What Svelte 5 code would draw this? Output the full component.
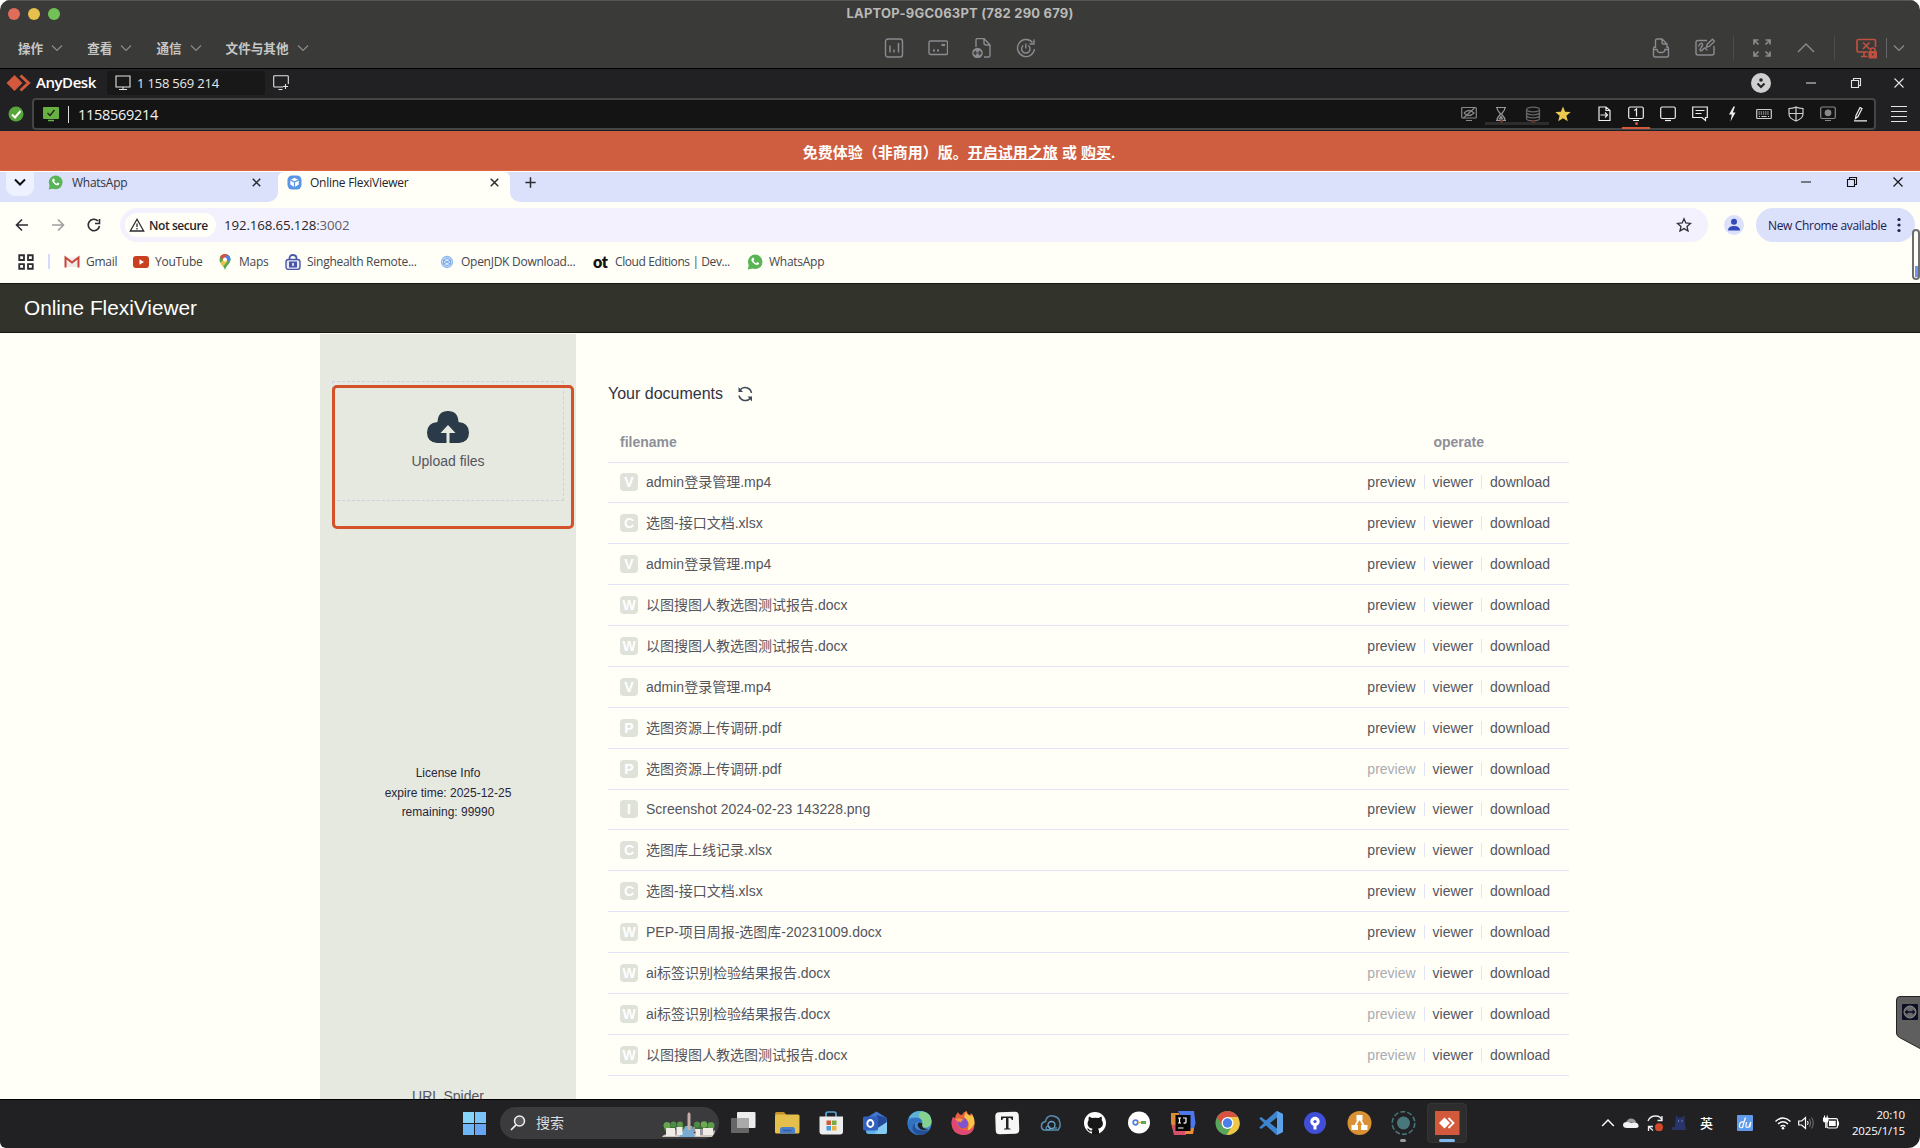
<script>
  // Inner markup of every icon, keyed by name.
  const icons = {
    chevron: '<path d="M1 3.5 6 8.5 11 3.5" fill="none" stroke="currentColor" stroke-width="1.2"/>',
    chart: '<rect x="1.5" y="1" width="17" height="18" rx="2.5"/><path d="M6 14.500V7.500M10 14.500V11.500M14.500 14.500V5" stroke-width="1.500"/>',
    card: '<rect x="1" y="3" width="18.500" height="13.500" rx="1.500"/><path d="M13.500 7h3.500" stroke-width="2.200"/><path d="M5 12.500h2M9 12.500h2" stroke-width="2"/>',
    fileSwap: '<path d="M4 9V2q0-1.500 1.500-1.500H12l6 6.500V17.500q0 1.500-1.500 1.500H12M12 .5V5q0 2 2 2h4"/><circle cx="5.500" cy="15" r="5.300" fill="currentColor" stroke="none"/><path d="M2 15h7M4 13 2 15l2 2M7 13l2 2-2 2" stroke="#3a3a38" stroke-width="1.200"/>',
    power: '<path d="M16.500 4.500A8.500 8.500 0 1 0 18.500 11M18 1.500v4.500h-4.500"/><path d="M7.300 7.500a4.200 4.200 0 1 0 5 0M9.800 5.500v5"/>',
    inbox: '<path d="M4.500 10V2.500Q4.500 1 6 1h5l5 5v4M11 1v3.500Q11 6 12.500 6H16"/><path d="M4.500 9H3.800Q2.500 9 2.500 10.500V17.500Q2.500 19 4 19H16q1.500 0 1.500-1.500V10.500Q17.500 9 16.200 9H16M2.500 11.500h3.500q.5 3 2.500 3h3q2 0 2.500-3h3.500"/>',
    sketch: '<path d="M12 2.500H3Q1 2.500 1 4.500v10.500q0 2 2 2H17q2 0 2-2V8"/><path d="M3.500 8.500c1-4 4.500-4 4-1.500S3.500 12 5.500 12.800s3-3.300 4.500-2.800.500 2 2.500 2"/><path d="m11.500 9 .8-2.800L17.500 1.200l2 2-5.200 5.200z"/>',
    fullscreen: '<path d="M2 6.500V2h4.500M2 2l4.500 4.500M13.500 2H18v4.500M18 2l-4.500 4.500M2 13.500V18h4.500M2 18l4.500-4.500M18 13.500V18h-4.500M18 18l-4.500-4.500" stroke-width="1.700"/>',
    up: '<path d="M2 14 10 6l8 8"/>',
    lockScreen: '<path d="M12 14H2.500Q1 14 1 12.500V3Q1 1.500 2.500 1.500h15.500q1.500 0 1.500 1.500v6M8 14v4.500M5 18.500h6.500M7 4.500l6.500 6.500M13.500 4.500 7 11" stroke-width="1.700"/><rect x="12.500" y="13" width="8.500" height="7.500" rx="1" fill="currentColor" stroke="none"/><path d="M14.500 13.500v-1.500q0-2 2.250-2T19 12v1.500" stroke-width="1.600"/><circle cx="16.750" cy="16.500" r="1" fill="#3a3a38" stroke="none"/>',
    monitor: '<path d="M1 1h14v11H1zM8 12v2.500M4 14.500h8"/>',
    monitorPlus: '<path d="M10 12H1.500Q.7 12 .7 11V1.500Q.7.700 1.500.700h13q.8 0 .8.800V9M5.500 14.500h4M12.500 9v5M10 11.500h5"/>',
    win_min: '<path d="M3 8h10"/>',
    win_restore: '<path d="M3.500 5.500h7v7h-7zM5.500 5.500v-2h7v7h-2"/>',
    win_close: '<path d="m3.500 3.500 9 9M12.500 3.500l-9 9"/>',
    eyeOff: '<rect x=".7" y="1.500" width="14.600" height="10.500" rx="1"/><path d="M5 14.500h6M3 7q5-5 10 0-5 5-10 0M2.500 12 13.500 2"/>',
    hourglass: '<path d="M3 1.500h10M3 14.500h10M4 1.500c0 4 3 5 3.500 6.500C7 9.500 4 10.500 4 14.500M12 1.500c0 4-3 5-3.500 6.500.500 1.500 3.500 2.500 3.500 6.500M6.500 13h3L8 10.500z"/>',
    db: '<ellipse cx="8" cy="3.500" rx="6.500" ry="2.300"/><path d="M1.500 3.500v9q0 2.300 6.500 2.300t6.500-2.300v-9M1.500 6.500Q2 8.800 8 8.800t6.500-2.300M1.500 9.500Q2 11.800 8 11.800t6.500-2.300"/>',
    star: '<path d="m8 .5 2.100 5.200 5.600.4-4.300 3.600 1.400 5.500L8 12.200l-4.800 3 1.400-5.500L.3 6.100l5.600-.4z" fill="#edc94f" stroke="none"/>',
    fileOut: '<path d="M3 1h7l4 3.500V14.500H3zM10 1v3.500h4M4.500 9h7M9 6.500 11.500 9 9 11.500"/>',
    mon1: '<rect x=".7" y="1" width="14.600" height="11.500" rx="1.500"/><path d="M5 14.500h6M6.300 4.500 8.500 3v7.500"/>',
    mon: '<rect x=".7" y="1" width="14.600" height="11.500" rx="1.500"/><path d="M5 14.500h6"/>',
    chat: '<path d="M.7 1h14.600v10.500H13.500v3l-3.500-3H.700zM3.500 4.500h9M3.500 7.500h6"/>',
    bolt: '<path d="M9.500.500 5 8.500h2.800L6.500 15.500 11.500 6.500H8.800L11 .500z" fill="currentColor" stroke="none"/>',
    keyboard: '<rect x=".7" y="3.500" width="14.600" height="9" rx=".8"/><path d="M2.500 6h11M2.500 8h11" stroke-dasharray="1.300 .9"/><path d="M3 10.500h1M5.500 10.500h5M12 10.500h1"/>',
    shield: '<path d="M1 2.500q4 0 7-1.500 3 1.500 7 1.500V8q0 4.500-7 7-7-2.500-7-7zM8 1v14M1 7.500h14"/>',
    record: '<rect x=".7" y="1" width="14.600" height="11.500" rx="1.500"/><path d="M5 14.500h6"/><circle cx="8" cy="6.800" r="2.800" fill="currentColor"/>',
    pen: '<path d="M3.500 12.500 4 9.500 8 1.500l2 1L6 10.500zM2 14.800h13"/>',
    burger: '<path d="M0 .5h16M0 5.500h16M0 10.500h16M0 15.500h16"/>',
    wa: '<circle cx="8.200" cy="7.800" r="7.300" fill="#58b455"/><path d="m.7 15.500 1.300-5 3.800 4z" fill="#58b455"/><path d="M5.200 4q1-.8 1.500 0l.7 1.600-.9 1.100q.9 1.800 2.700 2.500l1.100-1.100 1.700.8q.5.700-.6 1.700-1.400 1-4-.6Q4 7.500 4.400 5.200z" fill="#fff"/>',
    flexi: '<rect x=".5" y=".5" width="15" height="15" rx="5" fill="#5b95e6"/><path d="m8 3 4.500 2.200v5L8 13l-4.500-2.800v-5z" fill="#fff"/><path d="M3.500 5.200 8 7.500l4.500-2.300M8 7.500V13" fill="none" stroke="#5b95e6" stroke-width="1.200"/>',
    close: '<path d="m4 4 8 8M12 4l-8 8"/>',
    plus: '<path d="M8 2.500v11M2.500 8h11"/>',
    back: '<path d="M14 8H3M8 2.500 2.500 8 8 13.500"/>',
    fwd: '<path d="M2 8h11M8 2.500 13.500 8 8 13.500"/>',
    reload: '<path d="M13.500 9A5.700 5.700 0 1 1 12 4M13.500 2v4.500H9"/>',
    warn: '<path d="M8 2.200 14.700 14H1.300zM8 6.500v3.500M8 11v1.500"/>',
    starOutline: '<path d="m8 1.800 1.800 4.200 4.700.4-3.500 3.100 1 4.500-4-2.400-4 2.400 1-4.500-3.500-3.100 4.700-.4z"/>',
    user: '<circle cx="10" cy="10" r="10" fill="#dbe0fb"/><circle cx="10" cy="6.800" r="3" fill="#3548ba"/><path d="M4 15.500q0-4.500 6-4.500t6 4.500z" fill="#3548ba"/>',
    grid: '<path d="M2 2h4.200v4.200H2zM9.800 2H14v4.200H9.800zM2 9.800h4.200V14H2zM9.800 9.800H14V14H9.800z"/>',
    gmail: '<path d="M2 3.500h12V13H2z" fill="#eeeae6"/><path d="M1.500 13.500v-10L8 8.500l6.500-5v10" fill="none" stroke="#c9453a" stroke-width="2"/>',
    youtube: '<rect x="0" y="2" width="16" height="12" rx="3" fill="#c8401f"/><path d="M6.500 5.200 11 8l-4.500 2.800z" fill="#fff"/>',
    maps: '<path d="M8 0a5.500 5.500 0 0 1 5.500 5.500C13.500 9.500 9.500 11 8 16 6.500 11 2.500 9.500 2.500 5.500A5.500 5.500 0 0 1 8 0" fill="#54a853"/><path d="M8 0a5.500 5.500 0 0 0-5 3.300L6.500 6 10.500.600Q9.500 0 8 0" fill="#d95040"/><path d="M10.500.6 8 4l4 3.500Q13.500 6 13.500 5 13.200 2 10.500.600" fill="#4a80e8"/><path d="m3.500 9 4-4.500 3 3-4.500 5z" fill="#f0c244"/><circle cx="8" cy="5.500" r="2" fill="#fff"/>',
    sing: '<path d="M4.500 6V4.500Q4.500 1 8 1t3.500 3.500V6" fill="none" stroke="#4a57a8" stroke-width="1.800"/><rect x="1" y="5.500" width="14" height="10" rx="2.500" fill="#e8eaf8" stroke="#4a57a8" stroke-width="1.400"/><rect x="4" y="7.500" width="8" height="6" fill="#4a57a8"/><path d="M8 9v3" stroke="#fff" stroke-width="1.500"/>',
    jdk: '<circle cx="8" cy="8" r="5.500" fill="#d5e5fb" stroke="#8db7ef" stroke-width="1.300"/><path d="m8 4 3.500 2v4L8 12l-3.500-2V6zM4.500 6l7 4M11.500 6l-7 4" fill="none" stroke="#79a8e8"/>',
    cloudUp: '<path d="M10 32Q0 31 0 21.500T10.500 11Q11 0 21 0t10.500 11Q42 12 42 21.500T32 32H22.500V22h6l-7.500-8-7.500 8h6v10z" fill="#2b3a49"/>',
    refresh: '<path d="M2 9.500A6.500 6.500 0 0 0 13.500 12M14.500 7A6.500 6.500 0 0 0 3 4" fill="none" stroke="#3f4a59" stroke-width="1.500"/><path d="M1.500 1v5h4.500zM15 15.500v-5h-4.500z" fill="#3f4a59"/>',
    taskview: '<rect x="0" y="7" width="18" height="15" rx="1" fill="#666"/><rect x="6" y="1" width="18.500" height="16" rx="1" fill="#ececec"/><rect x="6" y="7" width="12" height="10" fill="#aaa"/>',
    folder: '<path d="M0 3q0-2 1.500-2H9l2.500 3H0z" fill="#c8902a"/><rect x="0" y="3.500" width="24.500" height="19" rx="1.500" fill="#e5bf4c"/><path d="M5 22.500v-4q0-2.500 2.500-2.500H17.500q2.500 0 2.500 2.500v4z" fill="#4a7fc8"/><path d="M8 19.500h8.500" stroke="#2c5ea6" stroke-width="1.500"/>',
    store: '<path d="M7 6V3q0-2 2-2h6q2 0 2 2v3" fill="none" stroke="#54a7da" stroke-width="1.700"/><path d="M.5 5.500h23.500v15q0 3-3 3H3.500q-3 0-3-3z" fill="#ededed"/><path d="M7.500 9.500h4.500v4.500H7.500z" fill="#d25a37"/><path d="M13 9.500h4.500v4.500H13z" fill="#7da83c"/><path d="M7.500 15h4.500v4.500H7.500z" fill="#479be0"/><path d="M13 15h4.500v4.500H13z" fill="#e9b43e"/>',
    outlook: '<path d="m13.500 .500 10.500 6.500v14q0 2-2 2H6q-3 0-3-3V7z" fill="#3f78cf"/><path d="m14 4 10 3-1 5-9 5z" fill="#264a98"/><path d="m6 23 18-12v10q0 2-2 2z" fill="#86cbf2"/><path d="M3 16v4q0 3 3 3h5l3-2z" fill="#5fb0ec"/><rect x="0" y="5.500" width="15" height="14" rx="1.500" fill="#3260be"/><ellipse cx="7.300" cy="12.500" rx="3" ry="3.500" fill="none" stroke="#fff" stroke-width="1.900"/>',
    edge: '<circle cx="12.500" cy="12" r="12" fill="#3f86cf"/><path d="M1.500 7.500Q5 0 12.500 0 24 0 24.500 10.500q0 6-6.500 6-4.500 0-2.500-3.500Q16 7 10 6.500q-5-.5-8.500 1" fill="#5cb3d6"/><path d="M15 .300Q24 2 24.500 10.500q0 6-6.500 6-4.500 0-2.500-3.500Q16 8 12 6.500 11 2 15 .300" fill="#86d18e"/><path d="M.6 12Q3 6.300 9.500 7q5 .5 5.500 4.500-4-2.500-7 1t-.5 8.500L11 24Q.500 22 .600 12" fill="#3272c2"/><path d="M8 12.500q-2 9 14.500 6.500Q19 24 12.500 24 5 22 5.500 16.500 6 13.500 8 12.500" fill="#254f97"/><path d="M15.300 12.500q-3-2-4.300 0t2 5.500q4 2 8 0-7 0-5.700-5.500" fill="#212123"/>',
    firefox: '<path d="M2 6q1 1 2 1Q5 3 7 1q1 3 4 3 1-3 5-4 0 3 3 4l1-2q4 5 3.500 11Q23 24 12 24 1 23 .5 13 .500 9 2 6" fill="#e95f3f"/><path d="M15 0q0 4 5 5l1-2q3 5 2.500 10-3 5-7 7Q20 10 13 6z" fill="#f5c546"/><path d="M1 14q2 9 11 10 8 0 11-7-9 5-14 1T6 9q-4-2-4-3-2 3-1 8" fill="#dd4779"/><circle cx="12" cy="12.500" r="5" fill="#8054cf"/><path d="M4 8q5-2 9 1-3 0-3 2.500Q6 11 4 8" fill="#f39a3c"/>',
    typora: '<rect x=".5" y="1" width="23.500" height="22" rx="4" fill="#f6f6f6" transform="rotate(-2 12 12)"/><path d="M6 9V5.500h12V9h-1.200q-.3-2-2-2H13.500V17.200l2 .5v.8H9v-.8l2-.5V7H9.300q-1.800 0-2 2z" fill="#222"/>',
    cloudNet: '<path d="M5 19Q2 18 2.500 14 3 11 6.500 10.500 8 4 14 5t6.500 5.500q2 4-1.500 8.500z" fill="none" stroke="#568fb0" stroke-width="1.500"/><circle cx="12.500" cy="14" r="3.500" fill="none" stroke="#6ba8c8" stroke-width="1.300"/><circle cx="9" cy="17" r="2" fill="none" stroke="#6ba8c8"/><path d="M15 17h3" stroke="#6ba8c8"/>',
    github: '<circle cx="12" cy="12" r="11" fill="#fff"/><path d="M6 5.500 9 7q3-.7 6.500 0L18.500 5.500q.7 2 .2 3.500 2.300 3.500.3 6.500-1.500 2-4 2.200 1 1 1 3V23H9v-2.500q-3 .5-4-1.500L4 17.500q1.500-.3 2.500 1.300 1 1 2.500.4L9.500 17.700q-3-.3-4-2.200-2-3 .2-6.500-.5-1.500.3-3.500" fill="#171717"/>',
    key: '<circle cx="12" cy="11.500" r="11" fill="#fff"/><circle cx="8.500" cy="11.500" r="2.300" fill="none" stroke="#4a7dea" stroke-width="1.700"/><path d="M11 11.500h3" stroke="#e6b83c" stroke-width="1.500"/><path d="M14 11.500h5" stroke="#57a95d" stroke-width="3"/>',
    idea: '<path d="M0 2h8v21H3L0 12z" fill="#d98c37"/><path d="M7 0h16l1.500 12-3 11-6-5z" fill="#4c78eb"/><path d="M1 14h14v10H3z" fill="#d94f6a"/><path d="m15 18 8-1-1 6h-8z" fill="#ed8c3b"/><path d="M4.500 4h15v16h-15z" fill="#050505"/><path d="M7 7h3M8.500 7v5M7 12h3M12 7h3v4q0 1.300-2.500 1M7 17h5.500" fill="none" stroke="#fff" stroke-width="1.200"/>',
    chrome: '<circle cx="12.500" cy="12" r="12" fill="#58a65c"/><path d="M2 6Q6 0 12.500 0T23 6H12.500l-5.200 9z" fill="#d75241"/><path d="M12.500 6H23q5 10-4 16-3 2-7.500 2l5.700-9z" fill="#efc646"/><circle cx="12.500" cy="12" r="6" fill="#fff"/><circle cx="12.500" cy="12" r="4.700" fill="#4b7fe9"/>',
    vscode: '<path d="M17.500 0 24 3v18l-6.500 3L7 14.500 2 18 .3 16.500 5 12 .3 7.500 2 6l5 3.500zM18 6.500 11 12l7 5.500z" fill="#3d85cf"/><path d="M18 0l6 3v18l-6 3z" fill="#5aa2ea"/>',
    lockBlue: '<circle cx="12" cy="12" r="11" fill="#414fd8"/><circle cx="12" cy="10.500" r="4.700" fill="#fff"/><path d="M10.500 13h3v5.500h-3z" fill="#fff"/><circle cx="12" cy="10.500" r="1.600" fill="#414fd8"/>',
    drawio: '<circle cx="12.500" cy="12" r="12" fill="#d99132"/><path d="m12.500 7-5 9M12.500 7l5 9" stroke="#fff" stroke-width="1.800"/><path d="M9.500 4h6v5.500h-6zM4.500 14H11v5H4.500zM14 14h6.500v5H14z" fill="#fff"/>',
    teal: '<circle cx="12.500" cy="12" r="6.500" fill="#48787c"/><circle cx="12.500" cy="12" r="11.300" fill="none" stroke="#48787c" stroke-width="1.500" stroke-dasharray="5 2.100"/>',
    anytile: '<path d="M0 0h24.500v24H0z" fill="#d3593d"/><path d="m9.500 6.500 5.500 5.500-5.500 5.500L4 12z" fill="#fff"/><path d="m13.500 7 5 5-5 5" fill="none" stroke="#fff" stroke-width="1.800"/>',
    win: '<path d="M0 0h11.200v11.200H0z" fill="#86d5f8"/><path d="M12.200 0h11.200v11.200H12.200z" fill="#7ac4f8"/><path d="M0 12.200h11.200v11.200H0z" fill="#6fb6f6"/><path d="M12.200 12.200h11.200v11.200H12.200z" fill="#67a4f2"/>',
    city: '<path d="M2 14h50v5H2z" fill="#3c6b35"/><circle cx="5" cy="13.500" r="3.500" fill="#66a44f"/><circle cx="11.500" cy="12.500" r="3" fill="#4f8c43"/><circle cx="18" cy="12.500" r="3" fill="#5b9a48"/><circle cx="35" cy="12.500" r="3" fill="#4f8c43"/><circle cx="42" cy="12.500" r="3.300" fill="#6aaa52"/><circle cx="49" cy="13.500" r="3.500" fill="#5c9b49"/><path d="M0 25Q1 22 8 22l40-1 5-3q0 4-3 7z" fill="#cfc5bb"/><path d="M23.500 14h6.500l3 11H17z" fill="#78abd2"/><path d="M25.500 18V2L27 0l1.500 2v16z" fill="#c7b0a8"/><path d="M4 16h9v8H4zM14.500 15h6v8h-6zM33 17h5v7h-4zM41 16h10v7H41z" fill="#f0ebe7"/><path d="M13 18h1.500v5H13zM31 15h2v5h-2zM38 17h3v6h-3z" fill="#9a96a0"/>',
    t_cloud: '<path d="M3 8Q4 3.500 8 3.500t5 3.500" fill="#9a9a9a"/><path d="M4 13Q0 13 0 10t4-3q3 0 4 1 5-2 7 1 2 4-2 4z" fill="#f2f2f2"/>',
    t_sync: '<path d="M1 6q2-5 7.500-5T15 5.500M15 1v4.500h-4.500M1.500 16v-4.500H6M1.500 11.500 6 15.500" fill="none" stroke="#eee" stroke-width="1.300"/><circle cx="12" cy="12.300" r="4" fill="#d4492a"/>',
    t_cat: '<path d="M5 0 7 2.500h4L13.500 0v6l1.500 9H2q-2-1-1-3 2 1 3-1z" fill="#27356b"/><path d="M7 6h1M10.500 6h1" stroke="#aabcf5"/>',
    t_du: '<rect width="16" height="16" rx="1" fill="#609aea"/><path d="M6.500 7Q3 6.500 2.500 10t3 2.500L7 7l1.500-4.500M6.200 10l-.5 2.500M9.500 7 8.800 11q0 2 3 1l2-5-1 5.500" fill="none" stroke="#fff" stroke-width="1.200"/>',
    t_wifi: '<path d="M.5 6.500q7.500-7 15 0M3 9q5-4.500 10 0M5.500 11.500q2.500-2 5 0" fill="none" stroke="#fff" stroke-width="1.400"/><circle cx="8" cy="13.300" r="1.300" fill="#fff"/>',
    t_vol: '<path d="M.7 6h3L7.500 2.500v11L3.700 10h-3z" fill="none" stroke="#fff" stroke-width="1.200"/><path d="M9.500 6q1.300 2 0 4" fill="none" stroke="#fff"/><path d="M11.500 4q2.500 4 0 8M13.500 2.500q3.500 5.500 0 11" fill="none" stroke="#777"/>',
    t_bat: '<rect x="4" y="3.700" width="10.500" height="9.300" rx="1.500" fill="none" stroke="#fff" stroke-width="1.200"/><path d="M6 5.700h6.700v5.300H6zM15 6.500h1v4h-1z" fill="#fff"/><path d="M0 2.500h5.500V6q0 1.500-2.700 1.500T0 6zM1 .5h1v2H1zM3.700.5h1v2h-1zM2.200 7h1.200v6H2.200z" fill="#fff"/>',
    search: '<circle cx="9.500" cy="6" r="5" fill="#58595c" stroke="#eee" stroke-width="1.500"/><path d="M6 9.800 1 15" stroke="#eee" stroke-width="1.700"/>',
    tv: '<rect width="16" height="16" rx="1" fill="#0c0e24"/><circle cx="8" cy="8" r="6" fill="#6a6a6a" stroke="#8f8f8f"/><path d="M2.500 8 5.500 5.500v1.700h5V5.500l3 2.500-3 2.500V8.800h-5v1.700z" fill="#0c0e24"/>'
  };

  const menus = ['操作', '查看', '通信', '文件与其他'];
  const sessionTools = [
    ['eyeOff', '#888'], ['hourglass', '#999'], ['db', '#666'], ['star', '#edc94f'],
    ['fileOut', '#eee'], ['mon1', '#eee'], ['mon', '#eee'], ['chat', '#eee'], ['bolt', '#eee'],
    ['keyboard', '#ccc'], ['shield', '#ccc'], ['record', '#888'], ['pen', '#eee']
  ];
  const bookmarks = [
    ['gmail', 'Gmail'], ['youtube', 'YouTube'], ['maps', 'Maps'],
    ['sing', 'Singhealth Remote...'], ['jdk', 'OpenJDK Download...'],
    ['bold', 'Cloud Editions | Dev...'], ['wa', 'WhatsApp']
  ];
  const files = [
    ['V', 'admin登录管理.mp4'], ['C', '选图-接口文档.xlsx'], ['V', 'admin登录管理.mp4'],
    ['W', '以图搜图人教选图测试报告.docx'], ['W', '以图搜图人教选图测试报告.docx'],
    ['V', 'admin登录管理.mp4'], ['P', '选图资源上传调研.pdf'], ['P', '选图资源上传调研.pdf', true],
    ['I', 'Screenshot 2024-02-23 143228.png'], ['C', '选图库上线记录.xlsx'],
    ['C', '选图-接口文档.xlsx'], ['W', 'PEP-项目周报-选图库-20231009.docx'],
    ['W', 'ai标签识别检验结果报告.docx', true], ['W', 'ai标签识别检验结果报告.docx', true],
    ['W', '以图搜图人教选图测试报告.docx', true]
  ];
  const apps = ['taskview', 'folder', 'store', 'outlook', 'edge', 'firefox', 'typora', 'cloudNet',
    'github', 'key', 'idea', 'chrome', 'vscode', 'lockBlue', 'drawio', 'teal', 'anytile'];
</script>

{#snippet icon(name, size = 16, cls = '', w = size, vw = size, vh = size)}
  <svg class="ic {cls}" width={w} height={size} viewBox="0 0 {vw} {vh}">{@html icons[name]}</svg>
{/snippet}

<div class="window">
  <header class="mac">
    <div class="titlebar">
      <div class="lights"><i class="red"></i><i class="yellow"></i><i class="green"></i></div>
      <b>LAPTOP-9GC063PT (782 290 679)</b>
    </div>
    <div class="menubar">
      <nav>
        {#each menus as m}
          <span class="menu">{m}{@render icon('chevron', 12, 'dim')}</span>
        {/each}
      </nav>
      <div class="tools mid">
        {@render icon('chart', 20, 'ln')}
        {@render icon('card', 20, 'ln')}
        {@render icon('fileSwap', 20, 'ln')}
        {@render icon('power', 20, 'ln')}
      </div>
      <div class="tools end">
        {@render icon('inbox', 20, 'ln')}
        {@render icon('sketch', 20, 'ln')}
        <i class="sep"></i>
        {@render icon('fullscreen', 20, 'ln')}
        {@render icon('up', 20, 'ln')}
        <i class="sep"></i>
        {@render icon('lockScreen', 21, 'ln danger')}
        <i class="sep bright"></i>
        {@render icon('chevron', 12, 'dim')}
      </div>
    </div>
  </header>

  <div class="desk-tabs">
    <svg class="logo" width="25" height="18" viewBox="0 0 25 18"><path d="m8.500 1 8 8-8 8-8-8z" fill="#d3593d" /><path d="m14.500 1.500 8 7.500-8 7.500" fill="none" stroke="#d3593d" stroke-width="3" /></svg>
    <span class="brand">AnyDesk</span>
    <span class="session">{@render icon('monitor', 16, 'ln1')}<span>1 158 569 214</span></span>
    {@render icon('monitorPlus', 16, 'ln1 newtab')}
    <div class="wctl">
      <svg class="hot" width="20" height="20" viewBox="0 0 20 20"><circle cx="10" cy="10" r="10" fill="#cfcfcf" /><circle cx="10" cy="7" r="1.800" fill="#222" /><path d="m6.500 10.500 3.500 3.500 3.500-3.500" fill="none" stroke="#222" stroke-width="2" /></svg>
      {@render icon('win_min', 16, 'ln1')}
      {@render icon('win_restore', 16, 'ln1')}
      {@render icon('win_close', 16, 'ln1')}
    </div>
  </div>

  <div class="desk-addr">
    <svg class="okay" width="16" height="16" viewBox="0 0 16 16"><circle cx="8" cy="8" r="7.500" fill="#58a53c" /><path d="m4 8.500 3 3 5.500-6.500" fill="none" stroke="#fff" stroke-width="2" /></svg>
    <div class="addr">
      <svg width="16" height="15" viewBox="0 0 16 15"><rect width="16" height="12" rx="1" fill="#69b043" /><path d="M5 13.500h6" stroke="#69b043" stroke-width="1.500" /><path d="m4.500 6 2.500 2.500L11.500 3" fill="none" stroke="#182612" stroke-width="1.300" /></svg>
      <i class="caret"></i>
      <span class="id">1158569214</span>
      <div class="stools">
        {#each sessionTools as [n, c], i}
          <span class="cell c{i}" style:color={c}>{@render icon(n, 16, 'ln0')}</span>
        {/each}
      </div>
    </div>
    {@render icon('burger', 16, 'ln1 burger')}
  </div>

  <div class="banner"><span>免费体验（非商用）版。<u>开启试用之旅</u> 或 <u>购买</u>.</span></div>

  <div class="tabstrip">
    <span class="tabsearch">{@render icon('chevron', 12, 'bold')}</span>
    <div class="tab">{@render icon('wa', 15, '', 15, 16, 16)}<span>WhatsApp</span>{@render icon('close', 15, 'x', 15, 16, 16)}</div>
    <div class="tab active">{@render icon('flexi', 15, '', 15, 16, 16)}<span>Online FlexiViewer</span>{@render icon('close', 15, 'x', 15, 16, 16)}</div>
    <div class="rest">{@render icon('plus', 15, 'x', 15, 16, 16)}</div>
    <div class="cctl">
      {@render icon('win_min', 16, 'x1')}
      {@render icon('win_restore', 16, 'x1')}
      {@render icon('win_close', 16, 'x1')}
    </div>
  </div>

  <div class="browser">
    <div class="nav">
      {@render icon('back', 16, 'x')}
      {@render icon('fwd', 16, 'x faded')}
      {@render icon('reload', 16, 'x')}
      <div class="omni">
        <span class="chip">{@render icon('warn', 16, 'x15')}<span>Not secure</span></span>
        <span class="url">192.168.65.128<em>:3002</em></span>
        {@render icon('starOutline', 16, 'x15 fav')}
      </div>
      {@render icon('user', 20, 'profile')}
      <span class="update"><span>New Chrome available</span><svg width="4" height="16" viewBox="0 0 4 16" fill="#1c2250"><circle cx="2" cy="2.500" r="1.600" /><circle cx="2" cy="8" r="1.600" /><circle cx="2" cy="13.500" r="1.600" /></svg></span>
    </div>
    <div class="marks">
      {@render icon('grid', 18, 'x', 18, 16, 16)}
      <i class="msep"></i>
      {#each bookmarks as [n, label], i}
        <span class="mark m{i}">
          {#if n === 'bold'}<b class="ot">ot</b>{:else}{@render icon(n, 16)}{/if}
          <span>{label}</span>
        </span>
      {/each}
    </div>
    <div class="scroller"><i></i></div>
  </div>

  <div class="apphead">Online FlexiViewer</div>

  <main>
    <aside>
      <div class="drop">
        {@render icon('cloudUp', 32, '', 42, 42, 32)}
        <span>Upload files</span>
        <div class="mark-box"></div>
      </div>
      <div class="license"><p>License Info</p><p>expire time: 2025-12-25</p><p>remaining: 99990</p></div>
      <div class="spider">URL Spider</div>
    </aside>
    <section>
      <h2>Your documents {@render icon('refresh', 17)}</h2>
      <div class="thead"><b>filename</b><b class="op">operate</b></div>
      <div class="rows">
        {#each files as [kind, name, off]}
          <div class="row">
            <b class="kind">{kind}</b><span class="name">{name}</span>
            <span class="act" class:off>preview</span><i></i><span class="act">viewer</span><i></i><span class="act">download</span>
          </div>
        {/each}
      </div>
    </section>
    <div class="dock">
      <svg width="24" height="54" viewBox="0 0 24 54"><path d="M24 .5H4Q.5.500.5 4V37q0 3 3 4.500L24 52.500" fill="#5f5f5f" stroke="#222" /></svg>
      {@render icon('tv', 16, 'tv')}
    </div>
  </main>

  <footer>
    {@render icon('win', 23, 'start', 23, 23.4, 23.4)}
    <div class="search">{@render icon('search', 16)}<span>搜索</span>{@render icon('city', 25, 'city', 56, 56, 25)}</div>
    <div class="apps">
      {#each apps as a}
        <span class="app app-{a}">{@render icon(a, 24, '', 25, 25, 24)}</span>
      {/each}
    </div>
    <div class="tray">
      {@render icon('chevron', 14, 'flip', 14, 12, 12)}
      {@render icon('t_cloud')}
      {@render icon('t_sync')}
      {@render icon('t_cat')}
      <span class="ime">英</span>
      {@render icon('t_du')}
      {@render icon('t_wifi')}
      {@render icon('t_vol')}
      {@render icon('t_bat')}
      <div class="clock"><span>20:10</span><span>2025/1/15</span></div>
    </div>
  </footer>
</div>

<style>
  :global(body) { background: #fff; }
  .window { width: 1920px; height: 1148px; border-radius: 10px 10px 12px 6px; overflow: hidden; display: flex; flex-direction: column; background: #fffff8; font-family: "Open Sans", "Noto Sans CJK SC", sans-serif; }
  .window :global(svg) { flex: none; display: block; }
  i { display: block; flex: none; }

  .mac { height: 69px; box-sizing: border-box; background: #3a3a38; border-top: 1px solid #565656; border-bottom: 1px solid #000; flex: none; }
  .titlebar { height: 24px; padding-bottom: 2px; display: grid; grid-template-columns: 1fr auto 1fr; align-items: center; }
  .titlebar b { font: 700 13px Inter, sans-serif; color: #b9b9b7; letter-spacing: .2px; }
  .lights { display: flex; gap: 8px; padding: 1px 0 0 8px; }
  .lights i { width: 12px; height: 12px; border-radius: 50%; }
  .red { background: #e06c5a; } .yellow { background: #e6c04d; } .green { background: #72c157; }
  .menubar { display: flex; height: 41px; align-items: center; padding-top: 1px; box-sizing: border-box; }
  nav { display: flex; gap: 25px; padding-left: 18px; width: 867px; box-sizing: border-box; }
  .menu { display: flex; align-items: center; gap: 8px; font: 700 12.6px "Noto Sans CJK SC", sans-serif; color: #c6c6c4; line-height: 20px; }
  .menu :global(svg) { margin-right: -1px; }
  .dim { color: #8b8b8e; }
  .tools { display: flex; align-items: center; }
  .mid { gap: 24px; padding-left: 17px; }
  .end { margin-left: auto; padding-right: 15px; }
  .end > :nth-child(2) { margin-left: 24px; }
  .end > :nth-child(3) { margin-left: 18px; }
  .end > :nth-child(4) { margin-left: 18px; }
  .end > :nth-child(5) { margin-left: 24px; }
  .end > :nth-child(6) { margin-left: 18px; }
  .end > :nth-child(7) { margin-left: 21px; }
  .end > :nth-child(8) { margin-left: 9px; }
  .end > :nth-child(9) { margin-left: 6px; }
  .sep { width: 1px; height: 24px; background: #4c4c4d; }
  .bright { background: #66666a; height: 20px; }
  .ln { fill: none; stroke: currentColor; stroke-width: 1.4; color: #8b8b90; }
  .danger { color: #c0503f; }

  .desk-tabs { height: 29px; padding-bottom: 2px; box-sizing: border-box; flex: none; background: #212123; display: flex; align-items: center; color: #e8e8e8; }
  .logo { margin-left: 6px; }
  .brand { margin: -2px 0 0 5px; width: 71px; font-weight: 600; font-size: 15px; letter-spacing: -.45px; color: #fff; }
  .session { display: flex; align-items: center; gap: 6px; width: 158px; height: 24px; box-sizing: border-box; padding-left: 8px; background: #181818; border-radius: 3px; font-size: 13px; letter-spacing: -.2px; }
  .ln1 { fill: none; stroke: #e4e4e4; stroke-width: 1.1; }
  .newtab { margin-left: 8px; }
  .wctl { margin-left: auto; display: flex; align-items: center; padding-right: 13px; }
  .wctl > :nth-child(2) { margin-left: 32px; }
  .wctl > :nth-child(3) { margin-left: 29px; }
  .wctl > :nth-child(4) { margin-left: 27px; }

  .desk-addr { height: 33px; flex: none; box-sizing: border-box; background: #212123; border-bottom: 1px solid #132025; display: flex; align-items: center; }
  .okay { margin-left: 8px; }
  .addr { margin-left: 8px; width: 1844px; height: 32px; box-sizing: border-box; border: 2px solid #454545; border-radius: 4px; background: #141414; display: flex; align-items: center; padding-left: 9px; color: #f2f2f2; }
  .caret { width: 1px; height: 17px; background: #ddd; margin-left: 9px; }
  .id { margin-left: 9px; font-size: 14.5px; letter-spacing: -.3px; }
  .stools { margin-left: auto; display: flex; align-self: stretch; margin-right: -2px; }
  .cell { width: 32px; display: flex; align-items: center; justify-content: center; box-sizing: border-box; position: relative; }
  .ln0 { fill: none; stroke: currentColor; stroke-width: 1.2; }
  .c3 { width: 28px; }
  .c4 { margin-left: 11px; }
  .c1::before, .c2::before { content: ''; position: absolute; left: 0; right: 0; bottom: 3px; height: 3px; background: #2d2d2d; }
  .c1::after, .c2::after, .c5::before { content: ''; position: absolute; left: 15px; bottom: 5px; width: 3px; height: 3px; border-radius: 50%; background: #6c3226; }
  .c5::before { background: #d3593d; bottom: 3px; }
  .c5::after { content: ''; position: absolute; left: 2px; right: 2px; bottom: -1px; height: 2px; background: #d3593d; }
  .burger { margin-left: 15px; }

  .banner { height: 40px; flex: none; background: #cf5d40; color: #fff; display: flex; align-items: center; justify-content: center; font: 700 15px "Liberation Sans", "Noto Sans CJK SC", sans-serif; box-sizing: border-box; border-bottom: 1px solid #e0663f; padding-top: 1px; }
  .banner span { margin-left: -2px; }

  .tabstrip { height: 31px; flex: none; box-sizing: border-box; border-top: 1px solid #fff; background: linear-gradient(#dbe0fb 50%, #fffff8 50%); display: flex; font-size: 12px; letter-spacing: -.26px; color: #33343c; }
  .tabsearch { flex: none; width: 34px; height: 30px; background: #dbe0fb; display: flex; align-items: flex-start; justify-content: center; padding: 4px 0 0 6px; box-sizing: border-box; position: relative; }
  .tabsearch::before { content: ''; position: absolute; left: 6px; top: 0; width: 28px; height: 24px; border-radius: 0 0 9px 9px; background: #eef1ff; }
  .tabsearch :global(svg) { position: relative; }
  .bold { color: #111; }
  .bold :global(path) { stroke-width: 2; }
  .tab { display: flex; align-items: center; width: 244px; box-sizing: border-box; padding: 0 14px 9px; gap: 9px; background: #dbe0fb; border-radius: 0 0 10px 0; }
  .tab.active { width: 232px; background: #fffff8; border-radius: 6px 6px 0 0; padding: 0 8px 9px 9px; color: #22232a; }
  .tab.active span { margin-left: -1px; }
  .tab > :global(.x) { margin-left: auto; }
  .rest { flex: 1; background: #dbe0fb; border-radius: 0 0 0 10px; padding: 3px 0 0 13px; }
  .x { fill: none; stroke: #2c2d33; stroke-width: 1.6; }
  .x15 { fill: none; stroke: #2c2d33; stroke-width: 1.3; }
  .x1 { fill: none; stroke: #111; stroke-width: 1.1; }
  .faded { opacity: .45; }
  .cctl { display: flex; gap: 30px; padding: 2px 14px 0 0; background: #dbe0fb; }

  .browser { height: 81px; flex: none; background: #fffff8; position: relative; }
  .nav { display: flex; align-items: center; height: 34px; padding: 6px 5px 0 14px; gap: 20px; font-size: 12px; }
  .omni { width: 1588px; flex: none; height: 34px; border-radius: 17px; background: #f4f1fe; margin-left: -2px; display: flex; align-items: center; padding: 0 16px 0 5px; box-sizing: border-box; }
  .chip { width: 91px; height: 24px; border-radius: 12px; background: #fffff8; display: flex; align-items: center; gap: 4px; padding-left: 4px; box-sizing: border-box; font-weight: 600; color: #25262b; letter-spacing: -.42px; white-space: nowrap; }
  .url { margin-left: 8px; font-size: 13.3px; letter-spacing: -.14px; color: #25262b; }
  .url em { font-style: normal; color: #5c5d66; }
  .fav { margin-left: auto; }
  .profile { margin-left: -4px; }
  .update { margin-left: -8px; width: 159px; flex: none; height: 34px; border-radius: 17px; background: #dbe0fb; display: flex; align-items: center; justify-content: space-between; padding: 0 14px 0 12px; box-sizing: border-box; color: #1c2250; letter-spacing: -.34px; white-space: nowrap; }
  .marks { display: flex; align-items: center; height: 39px; padding-left: 17px; font-size: 12px; letter-spacing: -.27px; color: #45464e; }
  .msep { width: 2px; height: 15px; background: #d3dcfc; margin-left: 13px; }
  .mark { display: flex; align-items: center; gap: 6px; white-space: nowrap; box-sizing: border-box; }
  .m0 { margin-left: 14px; width: 69px; } .m1 { width: 84px; } .m2 { width: 68px; } .m3 { width: 154px; } .m4 { width: 154px; } .m5 { width: 154px; }
  .m5 span { letter-spacing: -.4px; }
  .ot { width: 16px; font: 800 16px Lato, sans-serif; color: #111; letter-spacing: -.5px; }
  .scroller { position: absolute; right: 0; top: 27px; width: 8px; height: 51px; box-sizing: border-box; border: 2px solid #6e6e6e; border-radius: 4px; background: #fffff8; padding: 35px 0 0 1px; }
  .scroller i { width: 3px; height: 11px; background: #6e93f3; }

  .apphead { height: 50px; flex: none; box-sizing: border-box; background: #32342b; border-top: 1px solid #16170f; border-bottom: 1px solid #16170f; color: #fff; font: 20.8px/47px "Liberation Sans", sans-serif; padding-left: 24px; }

  main { height: 766px; flex: none; display: flex; position: relative; font-family: "Liberation Sans", "Noto Sans CJK SC", sans-serif; overflow: hidden; }
  aside { width: 256px; margin-left: 320px; margin-top: 1px; background: #e6e9e0; padding-top: 47px; display: flex; flex-direction: column; align-items: center; }
  .drop { width: 232px; height: 120px; box-sizing: border-box; border: 1px dashed #c6d3dc; align-self: flex-start; margin-left: 12px; flex: none; display: flex; flex-direction: column; align-items: center; padding-top: 29px; gap: 10px; font-size: 14px; line-height: 16px; color: #55555f; position: relative; }
  .mark-box { position: absolute; left: -1px; top: 3px; width: 242px; height: 144px; box-sizing: border-box; border: 3px solid #d4522a; border-radius: 5px; }
  .license { margin-top: 263px; text-align: center; font-size: 12px; color: #26263a; }
  .license p { margin: 0; line-height: 19.500px; }
  .spider { margin-top: 265px; font-size: 14px; line-height: 16px; color: #55555f; white-space: nowrap; }
  section { margin-left: 32px; width: 961px; padding-top: 51px; }
  h2 { margin: 0; font-weight: 400; font-size: 16px; line-height: 20px; color: #32323f; display: flex; align-items: center; gap: 14px; }
  .thead { height: 59px; box-sizing: border-box; border-bottom: 1px solid #e3e3f8; display: flex; justify-content: space-between; padding: 30px 85px 0 12px; font-size: 14px; line-height: 16px; color: #8f8f99; }
  .row { height: 41px; box-sizing: border-box; border-bottom: 1px solid #e3e3f8; display: flex; align-items: center; padding: 0 19px 0 12px; font-size: 14px; color: #55555f; }
  .row:nth-child(8n + 1) { height: 40px; padding-bottom: 1px; }
  .kind { width: 18px; height: 18px; border-radius: 4px; background: #dfe2d9; color: #fff; text-align: center; line-height: 18px; }
  .name { margin-left: 8px; margin-right: auto; line-height: 18px; white-space: nowrap; }
  .row i { width: 1px; height: 14px; background: #e3e3f8; margin: 0 8px; }
  .act.off { color: #ababb2; }
  .dock { position: absolute; right: 0; top: 663px; width: 24px; height: 54px; }
  .tv { position: absolute; left: 6px; top: 8px; }

  footer { height: 49px; flex: none; box-sizing: border-box; background: #212123; border-top: 1px solid #000; padding-bottom: 2px; display: flex; align-items: center; color: #fff; }
  .start { margin-left: 463px; }
  .search { margin-left: 14px; width: 219px; height: 32px; border-radius: 16px; background: #3b3b3e; display: flex; align-items: center; padding: 0 1px 0 10px; box-sizing: border-box; font-size: 14px; line-height: 18px; color: #ddd; }
  .search span { margin-left: 10px; }
  .city { margin: 3px 0 0 auto; }
  .apps { display: flex; margin-left: 2px; }
  .app { width: 44px; height: 40px; display: flex; align-items: center; justify-content: center; box-sizing: border-box; position: relative; }
  .app-anytile { width: 40px; margin-left: 2px; background: #2d2d2e; border: 1px solid #353536; border-radius: 4px; }
  .app-teal::after, .app-anytile::after { content: ''; position: absolute; bottom: 1px; left: 19px; width: 6px; height: 3px; border-radius: 2px; background: #999; }
  .app-anytile::after { left: 11px; width: 16px; bottom: 0; background: #7db8ef; }
  .tray { margin-left: auto; display: flex; align-items: center; padding-right: 15px; }
  .flip { transform: rotate(180deg); margin-right: 8px; }
  .tray > :nth-child(3), .tray > :nth-child(4) { margin-left: 8px; }
  .ime { font-size: 13px; line-height: 17px; font-weight: 500; margin-left: 13px; }
  .tray > :nth-child(6) { margin-left: 24px; }
  .tray > :nth-child(7) { margin-left: 22px; }
  .tray > :nth-child(8) { margin-left: 7px; }
  .tray > :nth-child(9) { margin-left: 9px; }
  .clock { width: 66px; display: flex; flex-direction: column; align-items: flex-end; font-size: 11.500px; line-height: 16px; letter-spacing: -.15px; }
</style>
